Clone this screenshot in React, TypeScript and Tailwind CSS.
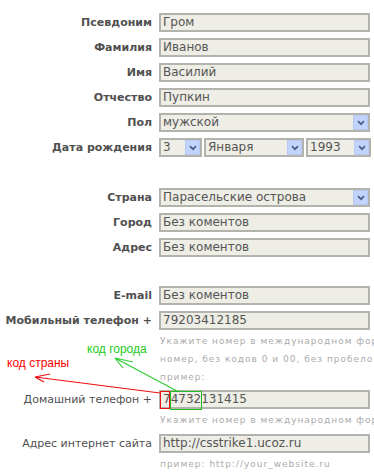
import React from 'react';

const font = { fontFamily: '"DejaVu Sans", Verdana, sans-serif' };

interface RowProps {
  label: string;
  bold?: boolean;
  className?: string;
  children: React.ReactNode;
}

const Row = ({ label, bold = true, className = '', children }: RowProps) => (
  <div className={`flex items-center h-[19px] ${className}`}>
    <div
      className={`w-[152px] shrink-0 text-right text-[11px] leading-[19px] whitespace-nowrap text-[#505050] ${
        bold ? 'font-bold' : ''
      }`}
    >
      {label}
    </div>
    <div className="ml-[7px] flex gap-[2px]">{children}</div>
  </div>
);

const Field = ({ value }: { value: string }) => (
  <div className="w-[211px] h-[19px] border-2 border-[#b3b3ad] bg-[#eeede6] pl-[2px] text-[12px] leading-[15px] text-[#555] whitespace-nowrap overflow-hidden">
    {value}
  </div>
);

const Select = ({ value, w }: { value: string; w: string }) => (
  <div
    className={`${w} h-[19px] border-2 border-[#b3b3ad] bg-[#eeede6] flex items-center justify-between pl-[2px] text-[12px] leading-[15px] text-[#555] whitespace-nowrap`}
  >
    <span>{value}</span>
    <span className="w-[15px] h-[15px] bg-[#c3d4fc] border border-[#b7c9f4] flex items-center justify-center">
      <svg width="8" height="6" viewBox="0 0 8 6">
        <path d="M1 1.2 L4 4.2 L7 1.2" fill="none" stroke="#4a5f8a" strokeWidth="1.8" />
      </svg>
    </span>
  </div>
);

const Hint = ({ lines }: { lines: string[] }) => (
  <div className="pl-[160px] text-[9px] leading-[18px] tracking-[1px] text-[#ababab] whitespace-nowrap">
    {lines.map((l) => (
      <div key={l}>{l}</div>
    ))}
  </div>
);

export default function App() {
  return (
    <div className="relative w-[374px] h-[475px] overflow-hidden bg-white" style={font}>
      <div className="flex flex-col pt-[13px]">
        <div className="flex flex-col gap-[6px]">
          <Row label="Псевдоним">
            <Field value="Гром" />
          </Row>
          <Row label="Фамилия">
            <Field value="Иванов" />
          </Row>
          <Row label="Имя">
            <Field value="Василий" />
          </Row>
          <Row label="Отчество">
            <Field value="Пупкин" />
          </Row>
          <Row label="Пол">
            <Select value="мужской" w="w-[211px]" />
          </Row>
          <Row label="Дата рождения">
            <Select value="3" w="w-[43px]" />
            <Select value="Января" w="w-[100px]" />
            <Select value="1993" w="w-[65px]" />
          </Row>
        </div>

        <div className="flex flex-col gap-[6px] mt-[31px]">
          <Row label="Страна">
            <Select value="Парасельские острова" w="w-[211px]" />
          </Row>
          <Row label="Город">
            <Field value="Без коментов" />
          </Row>
          <Row label="Адрес">
            <Field value="Без коментов" />
          </Row>
        </div>

        <div className="flex flex-col gap-[6px] mt-[29px]">
          <Row label="E-mail">
            <Field value="Без коментов" />
          </Row>
          <Row label="Мобильный телефон +">
            <Field value="79203412185" />
          </Row>
        </div>
        <div className="mt-[2px]">
          <Hint
            lines={[
              'Укажите номер в международном формате',
              'номер, без кодов 0 и 00, без пробелов и тире',
              'пример:',
            ]}
          />
        </div>
        <Row label="Домашний телефон +" bold={false} className="mt-[4px]">
          <Field value="74732131415" />
        </Row>
        <div className="mt-[2px]">
          <Hint lines={['Укажите номер в международном формате']} />
        </div>
        <Row label="Адрес интернет сайта" bold={false} className="mt-[5px]">
          <Field value="http://csstrike1.ucoz.ru" />
        </Row>
        <div className="mt-[2px]">
          <Hint lines={['пример: http://your_website.ru']} />
        </div>
      </div>

      {/* аннотации: код страны / код города */}
      <svg className="absolute left-0 top-0 pointer-events-none" width="374" height="475">
        <rect x="160.5" y="391.5" width="9" height="17" fill="none" stroke="#ee1111" strokeWidth="1" />
        <rect x="170.5" y="391.5" width="31" height="18" fill="none" stroke="#22bb22" strokeWidth="1" />
        <path d="M160 393 L35 377 M35 377 L50 374 M35 377 L44 382" fill="none" stroke="#ee1111" strokeWidth="1.2" />
        <path d="M177 391 L115 358 M115 358 L133 362 M115 358 L123 368" fill="none" stroke="#33cc33" strokeWidth="1.2" />
      </svg>
      <div
        className="absolute left-[7px] top-[356px] text-[12px] leading-[14px] text-[#ff0000]"
        style={{ fontFamily: '"Liberation Sans", Arial, sans-serif' }}
      >
        код страны
      </div>
      <div
        className="absolute left-[87px] top-[342px] text-[12px] leading-[14px] text-[#22cc22]"
        style={{ fontFamily: '"Liberation Sans", Arial, sans-serif' }}
      >
        код города
      </div>
    </div>
  );
}
